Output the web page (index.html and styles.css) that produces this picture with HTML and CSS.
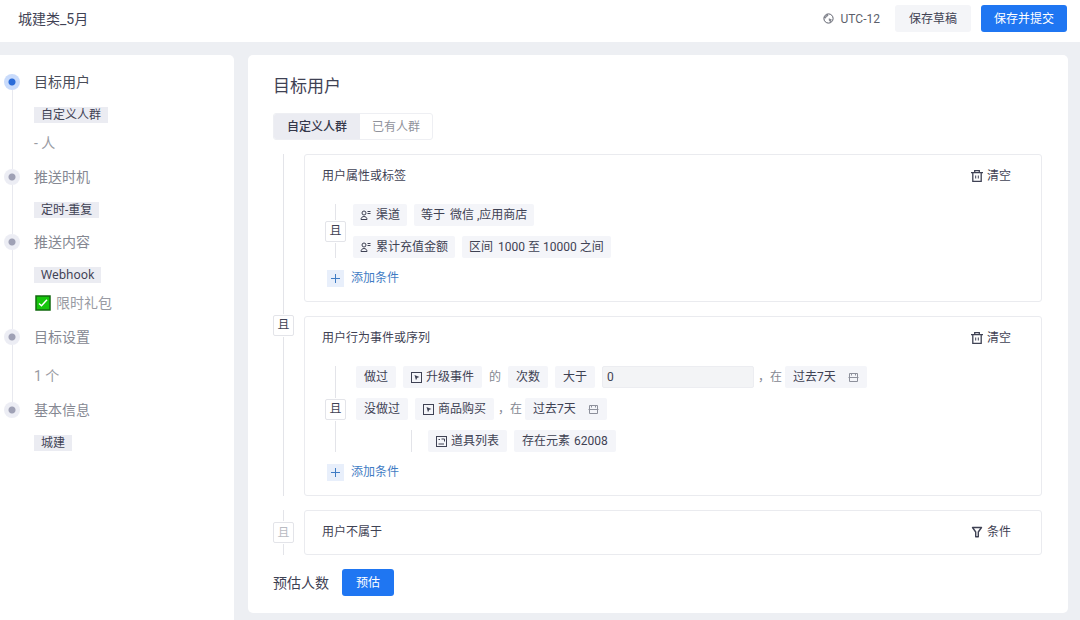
FILE: index.html
```html
<!DOCTYPE html>
<html lang="zh-CN">
<head>
<meta charset="utf-8">
<meta name="viewport" content="width=device-width, initial-scale=1">
<title>城建类_5月</title>
<link rel="stylesheet" href="styles.css">
</head>
<body>
<svg class="defs" aria-hidden="true">
  <symbol id="i-user" viewBox="0 0 11 11"><g fill="none" stroke="currentColor"><circle cx="4" cy="3" r="2"/><path d="M1 9.500c0-4 6-4 6 0zM7.500 1.500h3M7.500 3.500h3"/></g></symbol>
  <symbol id="i-event" viewBox="0 0 11 11"><rect x=".5" y=".5" width="10" height="10" fill="none" stroke="currentColor"/><path d="M3.500 3l5 2-2.200.8L5 8.200z" fill="currentColor"/></symbol>
  <symbol id="i-list" viewBox="0 0 11 11"><g fill="none" stroke="currentColor"><rect x=".5" y=".5" width="10" height="10"/><path d="M2.500 3.500h1.500M5.500 3h3v2.500M2.500 8h5.500"/></g></symbol>
  <symbol id="i-date" viewBox="0 0 11 11"><path d="M1.500 5V1.500h8V5M.5 5.500h10M1.500 6v3.500h8V6M3.500 1.500v2M7.500 1.500v2" fill="none" stroke="currentColor"/></symbol>
  <symbol id="i-trash" viewBox="0 0 12 12"><g fill="none" stroke="currentColor" stroke-width="1.300"><path d="M0 2.700h12M3.700 2.500V.7h4.600v1.800M1.800 3v8.300h8.400V3"/><path d="M4.700 5.500v3M7.300 5.500v3" stroke-width="1"/></g></symbol>
  <symbol id="i-filter" viewBox="0 0 12 12"><path d="M1.500 1.500h9L7.300 6v4.800H4.700V6z" fill="none" stroke="currentColor" stroke-width="1.400" stroke-linejoin="round"/></symbol>
</svg>

<header class="topbar">
  <h1 class="topbar-title">城建类_5月</h1>
  <div class="topbar-actions">
    <span class="timezone">
      <svg class="icon" width="11" height="11" viewBox="0 0 11 11" aria-hidden="true"><circle cx="5.500" cy="5.500" r="4.600" fill="none" stroke="currentColor"/><path d="M4.500 1l1 1.700L3.500 4 2.800 5.500l-2-.5M5.800 5.200l3 1.300-1.300 3-1.700-2.300z" fill="currentColor" fill-opacity=".75"/></svg>
      UTC-12
    </span>
    <button class="btn btn-light" type="button">保存草稿</button>
    <button class="btn btn-primary" type="button">保存并提交</button>
  </div>
</header>

<div class="layout">
  <nav class="sidebar" aria-label="步骤">
    <ol class="steps">
      <li class="step step-active">
        <a class="step-title" href="#target">目标用户</a>
        <span class="tag">自定义人群</span>
        <span class="step-note">- 人</span>
      </li>
      <li class="step">
        <a class="step-title" href="#timing">推送时机</a>
        <span class="tag">定时-重复</span>
      </li>
      <li class="step">
        <a class="step-title" href="#content">推送内容</a>
        <span class="tag tag-latin">Webhook</span>
        <span class="step-note">
          <svg class="check" width="16" height="16" viewBox="0 0 16 16" aria-hidden="true"><rect x="1" y="1" width="14" height="14" fill="#16c60c" stroke="#12690f" stroke-width="1.500"/><path d="M4 8.500l2.500 2.300L12 4.800" fill="none" stroke="#fff" stroke-width="1.500"/></svg>
          限时礼包
        </span>
      </li>
      <li class="step">
        <a class="step-title" href="#goal">目标设置</a>
        <span class="step-note step-count">1 个</span>
      </li>
      <li class="step">
        <a class="step-title" href="#basic">基本信息</a>
        <span class="tag">城建</span>
      </li>
    </ol>
  </nav>

  <main class="panel" id="target">
    <h2 class="panel-title">目标用户</h2>
    <div class="tabs" role="tablist">
      <button class="tab tab-active" type="button" role="tab" aria-selected="true">自定义人群</button>
      <button class="tab" type="button" role="tab" aria-selected="false">已有人群</button>
    </div>

    <div class="block">
      <div class="rail"><button class="joiner" type="button">且</button></div>
      <div class="cards">
        <section class="card">
          <div class="card-head">
            <h3 class="card-title">用户属性或标签</h3>
            <button class="text-btn" type="button"><svg class="icon" width="12" height="12"><use href="#i-trash"/></svg>清空</button>
          </div>
          <div class="group">
            <div class="rail"><button class="joiner" type="button">且</button></div>
            <div class="rows">
              <div class="row">
                <button class="chip" type="button"><svg class="icon" width="11" height="11"><use href="#i-user"/></svg>渠道</button>
                <button class="chip" type="button"><span>等于</span><span>微信 ,应用商店</span></button>
              </div>
              <div class="row">
                <button class="chip" type="button"><svg class="icon" width="11" height="11"><use href="#i-user"/></svg>累计充值金额</button>
                <button class="chip" type="button"><span>区间</span><span>1000 至 10000 之间</span></button>
              </div>
            </div>
          </div>
          <button class="add" type="button"><span class="plus"></span>添加条件</button>
        </section>

        <section class="card">
          <div class="card-head">
            <h3 class="card-title">用户行为事件或序列</h3>
            <button class="text-btn" type="button"><svg class="icon" width="12" height="12"><use href="#i-trash"/></svg>清空</button>
          </div>
          <div class="group group-events">
            <div class="rail"><button class="joiner" type="button">且</button></div>
            <div class="rows">
              <div class="row">
                <button class="chip" type="button">做过</button>
                <button class="chip" type="button"><svg class="icon" width="11" height="11"><use href="#i-event"/></svg>升级事件</button>
                <span class="word">的</span>
                <button class="chip" type="button">次数</button>
                <button class="chip" type="button">大于</button>
                <input class="value" type="text" value="0" aria-label="次数">
                <span class="period"><span>，在</span><button class="chip chip-date" type="button">过去7天<svg class="icon" width="11" height="11"><use href="#i-date"/></svg></button></span>
              </div>
              <div class="row">
                <button class="chip" type="button">没做过</button>
                <button class="chip" type="button"><svg class="icon" width="11" height="11"><use href="#i-event"/></svg>商品购买</button>
                <span class="period"><span>，在</span><button class="chip chip-date" type="button">过去7天<svg class="icon" width="11" height="11"><use href="#i-date"/></svg></button></span>
              </div>
              <div class="row row-nested">
                <button class="chip" type="button"><svg class="icon" width="11" height="11"><use href="#i-list"/></svg>道具列表</button>
                <button class="chip" type="button"><span>存在元素</span><span>62008</span></button>
              </div>
            </div>
          </div>
          <button class="add" type="button"><span class="plus"></span>添加条件</button>
        </section>
      </div>
    </div>

    <div class="block">
      <div class="rail rail-muted"><button class="joiner" type="button">且</button></div>
      <div class="cards">
        <section class="card">
          <div class="card-head">
            <h3 class="card-title">用户不属于</h3>
            <button class="text-btn" type="button"><svg class="icon" width="12" height="12"><use href="#i-filter"/></svg>条件</button>
          </div>
        </section>
      </div>
    </div>

    <div class="estimate">
      <span>预估人数</span>
      <button class="btn btn-primary" type="button">预估</button>
    </div>
  </main>
</div>
</body>
</html>
```
FILE: styles.css
```css
* {
  box-sizing: border-box;
}

body {
  margin: 0;
  min-height: 100vh;
  display: flex;
  flex-direction: column;
  background: #edeff3;
  color: #3f4254;
  font: 12px/20px Roboto, "Noto Sans CJK SC", sans-serif;
}

button,
input {
  margin: 0;
  padding: 0;
  border: 0;
  background: none;
  color: inherit;
  font: inherit;
}

button {
  cursor: pointer;
  white-space: nowrap;
}

h1,
h2,
h3,
ol {
  margin: 0;
  padding: 0;
  font-size: 12px;
  font-weight: 400;
  list-style: none;
}

.defs {
  position: absolute;
  width: 0;
  height: 0;
}

.icon,
.check {
  flex: none;
}

.topbar {
  display: flex;
  align-items: center;
  justify-content: space-between;
  height: 42px;
  padding: 0 13px 5px 18px;
  background: #fff;
}

.topbar-title {
  font-size: 14px;
}

.topbar-actions {
  display: flex;
  align-items: center;
  gap: 10px;
}

.timezone {
  display: flex;
  align-items: center;
  gap: 7px;
  margin-right: 5px;
  color: #5c5f6b;
}

.btn {
  height: 27px;
  padding: 0 13px;
  border-radius: 3px;
}

.btn-light {
  padding: 0 14px;
  background: #f4f5f8;
}

.btn-primary {
  background: #1f76f2;
  color: #fff;
}

.layout {
  flex: 1;
  display: grid;
  grid-template-columns: 234px 1fr;
  gap: 14px;
  padding: 13px 12px 0 0;
}

.sidebar {
  padding: 17px 4px;
  border-top-right-radius: 5px;
  background: #fff;
}

.step {
  position: relative;
  display: flex;
  flex-direction: column;
  align-items: flex-start;
  gap: 10px;
  padding: 0 0 14px 30px;
}

.step::before {
  content: "";
  position: absolute;
  top: 2px;
  left: 0;
  width: 16px;
  height: 16px;
  border-radius: 50%;
  background: radial-gradient(circle, #9fa1b5 3px, #ecedf4 4px);
}

.step-active::before {
  background: radial-gradient(circle, #2b6cd8 3px, #c9dbfb 4px);
}

.step:not(:last-child)::after {
  content: "";
  position: absolute;
  top: 18px;
  bottom: -2px;
  left: 8px;
  width: 1px;
  background: #e8e9ef;
}

.step-title {
  margin-bottom: 5px;
  color: #858892;
  font-size: 14px;
  text-decoration: none;
}

.step-active .step-title {
  color: #4a4d59;
}

.tag {
  padding: 0 7px;
  background: #ebecf2;
  line-height: 16px;
}

.tag-latin {
  font-family: "Noto Sans", sans-serif;
}

.step-note {
  display: flex;
  align-items: center;
  gap: 5px;
  color: #999ba3;
  font-size: 14px;
}

.step-count {
  padding-top: 4px;
}

.check {
  margin-left: 1px;
}

.panel {
  margin-bottom: 7px;
  padding: 19px 26px 16px 25px;
  border-radius: 5px;
  background: #fff;
}

.panel-title {
  font-size: 17px;
  line-height: 24px;
}

.tabs {
  display: inline-flex;
  margin: 15px 0 14px;
  border: 1px solid #eeeff3;
  border-radius: 3px;
  overflow: hidden;
  vertical-align: top;
}

.tab {
  height: 25px;
  padding: 0 12px;
  color: #90929b;
}

.tab-active {
  padding: 0 13px;
  background: #ebecf2;
  color: #35384a;
  font-weight: 500;
}

.block {
  display: flex;
  gap: 10px;
  margin-bottom: 14px;
}

.rail {
  flex: none;
  display: flex;
  flex-direction: column;
  align-items: center;
  gap: 1px;
  width: 21px;
}

.rail::before,
.rail::after {
  content: "";
  flex: 1;
  width: 1px;
  background: #e3e4e9;
}

.joiner {
  width: 21px;
  height: 21px;
  border: 1px solid #e3e4e9;
  border-radius: 2px;
  background: #fff;
  line-height: 18px;
}

.rail-muted .joiner {
  color: #b9bbc2;
}

.cards {
  flex: 1;
  display: flex;
  flex-direction: column;
  gap: 14px;
}

.card {
  padding: 11px 30px 15px 17px;
  border: 1px solid #eaebef;
  border-radius: 3px;
}

.card-head {
  display: flex;
  align-items: center;
  justify-content: space-between;
}

.card-head:only-child {
  margin-bottom: -3px;
}

.text-btn {
  display: flex;
  align-items: center;
  gap: 4px;
}

.group {
  display: flex;
  gap: 7px;
  margin: 18px 0 12px 3px;
}

.group-events {
  gap: 10px;
}

.rows {
  flex: 1;
  display: flex;
  flex-direction: column;
  gap: 10px;
}

.row {
  display: flex;
  align-items: center;
  gap: 7px;
}

.row-nested {
  margin-left: 55px;
  padding-left: 16px;
  border-left: 1px solid #e3e4e9;
}

.chip {
  display: flex;
  align-items: center;
  gap: 5px;
  height: 22px;
  padding: 0 7px;
  border-radius: 2px;
  background: #f4f5f9;
}

.group-events .chip {
  gap: 4px;
  padding: 0 8px;
}

.group-events .chip-date {
  gap: 12px;
}

.chip-date .icon {
  color: #8d909b;
}

.word,
.period > span {
  color: #858892;
}

.period {
  display: flex;
  align-items: center;
  gap: 3px;
  margin-left: -3px;
}

.value {
  width: 152px;
  height: 22px;
  padding: 0 4px;
  border: 1px solid #ecedf1;
  border-radius: 2px;
  background: #f3f4f6;
}

.add {
  display: flex;
  align-items: center;
  gap: 7px;
  height: 16px;
  margin-left: 5px;
  color: #3f7cc4;
}

.plus {
  width: 17px;
  height: 17px;
  background:
    linear-gradient(#3f7cc4, #3f7cc4) center / 9px 1px no-repeat,
    linear-gradient(#3f7cc4, #3f7cc4) center / 1px 9px no-repeat,
    #e8effb;
}

.estimate {
  display: flex;
  align-items: center;
  gap: 13px;
  font-size: 14px;
}

.estimate .btn {
  padding: 0 14px;
  font-size: 12px;
}
```
